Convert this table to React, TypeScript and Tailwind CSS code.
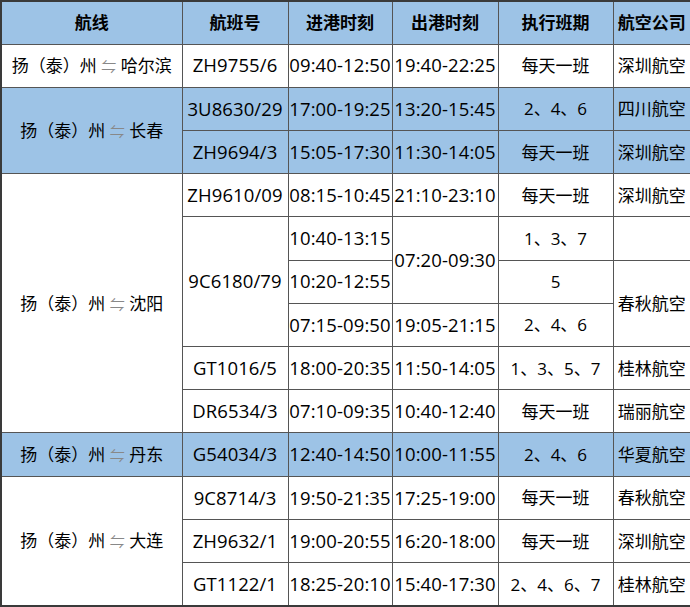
import React from 'react';

type Cell = { text?: string; rowSpan?: number };
type Row = { blue?: boolean; cells: Cell[] };

const route = (city: string) => (
  <span>
    扬（泰）州 <span className="text-[#888] text-[15px]">⇋</span> {city}
  </span>
);

// each row only lists the cells that start in that row (rowSpan handles the rest)
const rows: Row[] = [
  {
    cells: [
      { text: '哈尔滨' },
      { text: 'ZH9755/6' },
      { text: '09:40-12:50' },
      { text: '19:40-22:25' },
      { text: '每天一班' },
      { text: '深圳航空' },
    ],
  },
  {
    blue: true,
    cells: [
      { text: '长春', rowSpan: 2 },
      { text: '3U8630/29' },
      { text: '17:00-19:25' },
      { text: '13:20-15:45' },
      { text: '2、4、6' },
      { text: '四川航空' },
    ],
  },
  {
    blue: true,
    cells: [
      { text: 'ZH9694/3' },
      { text: '15:05-17:30' },
      { text: '11:30-14:05' },
      { text: '每天一班' },
      { text: '深圳航空' },
    ],
  },
  {
    cells: [
      { text: '沈阳', rowSpan: 6 },
      { text: 'ZH9610/09' },
      { text: '08:15-10:45' },
      { text: '21:10-23:10' },
      { text: '每天一班' },
      { text: '深圳航空' },
    ],
  },
  {
    cells: [
      { text: '9C6180/79', rowSpan: 3 },
      { text: '10:40-13:15' },
      { text: '07:20-09:30', rowSpan: 2 },
      { text: '1、3、7' },
      { text: '' },
    ],
  },
  {
    cells: [{ text: '10:20-12:55' }, { text: '5' }, { text: '春秋航空', rowSpan: 2 }],
  },
  {
    cells: [{ text: '07:15-09:50' }, { text: '19:05-21:15' }, { text: '2、4、6' }],
  },
  {
    cells: [
      { text: 'GT1016/5' },
      { text: '18:00-20:35' },
      { text: '11:50-14:05' },
      { text: '1、3、5、7' },
      { text: '桂林航空' },
    ],
  },
  {
    cells: [
      { text: 'DR6534/3' },
      { text: '07:10-09:35' },
      { text: '10:40-12:40' },
      { text: '每天一班' },
      { text: '瑞丽航空' },
    ],
  },
  {
    blue: true,
    cells: [
      { text: '丹东' },
      { text: 'G54034/3' },
      { text: '12:40-14:50' },
      { text: '10:00-11:55' },
      { text: '2、4、6' },
      { text: '华夏航空' },
    ],
  },
  {
    cells: [
      { text: '大连', rowSpan: 3 },
      { text: '9C8714/3' },
      { text: '19:50-21:35' },
      { text: '17:25-19:00' },
      { text: '每天一班' },
      { text: '春秋航空' },
    ],
  },
  {
    cells: [
      { text: 'ZH9632/1' },
      { text: '19:00-20:55' },
      { text: '16:20-18:00' },
      { text: '每天一班' },
      { text: '深圳航空' },
    ],
  },
  {
    cells: [
      { text: 'GT1122/1' },
      { text: '18:25-20:10' },
      { text: '15:40-17:30' },
      { text: '2、4、6、7' },
      { text: '桂林航空' },
    ],
  },
];

const cities = ['哈尔滨', '长春', '沈阳', '丹东', '大连'];
const headers = ['航线', '航班号', '进港时刻', '出港时刻', '执行班期', '航空公司'];

// flight numbers and times run a touch wider than the CJK text
const isLatin = (t?: string) => !!t && /^[A-Z0-9:/-]+$/.test(t) && t.length > 1;

export default function App() {
  return (
    <div className="w-[690px] h-[607px] bg-white text-black font-[family-name:'Open_Sans','Noto_Sans_CJK_SC',sans-serif] text-[17px]">
      <table className="w-[690px] h-[607px] table-fixed border-collapse border-2 border-[#3a3a3a]">
        <colgroup>
          <col className="w-[181px]" />
          <col className="w-[106px]" />
          <col className="w-[104px]" />
          <col className="w-[106px]" />
          <col className="w-[115px]" />
          <col className="w-[78px]" />
        </colgroup>
        <thead>
          <tr className="h-[43px] bg-[#9dc3e6]">
            {headers.map((h) => (
              <th key={h} className="border border-[#555] font-bold text-center p-0 whitespace-nowrap">
                {h}
              </th>
            ))}
          </tr>
        </thead>
        <tbody>
          {rows.map((row, i) => (
            <tr key={i} className={`h-[43px] ${row.blue ? 'bg-[#9dc3e6]' : 'bg-white'}`}>
              {row.cells.map((c, j) => (
                <td
                  key={j}
                  rowSpan={c.rowSpan}
                  className={`border border-[#555] text-center p-0 whitespace-nowrap leading-none ${
                    isLatin(c.text) ? 'text-[18.5px] tracking-[0.1px]' : ''
                  }`}
                >
                  {c.text && cities.includes(c.text) ? route(c.text) : c.text}
                </td>
              ))}
            </tr>
          ))}
        </tbody>
      </table>
    </div>
  );
}
